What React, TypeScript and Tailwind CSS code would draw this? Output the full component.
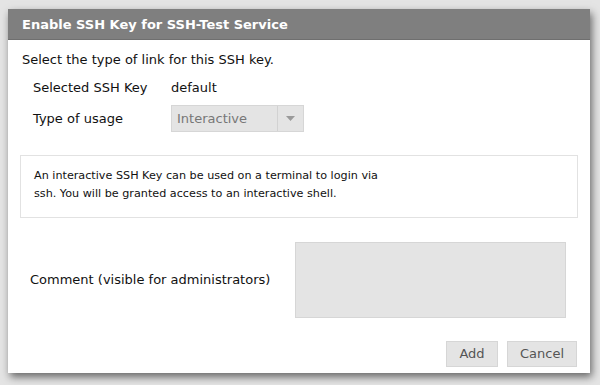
export default function App() {
  return (
    <div className="w-[600px] h-[385px] bg-[#e4e4e4] pt-[9px] pl-[8px] font-['DejaVu_Sans',sans-serif] text-[13px] text-[#111]">
      <div className="w-[582px] h-[364px] bg-white shadow-[2px_4px_8px_rgba(0,0,0,0.55)] flex flex-col">
        <div className="h-[31px] bg-[#7f7f7f] border-b border-[#6f6f6f] flex items-center pt-[2px] px-[14px] text-white font-bold text-[13px]">
          Enable SSH Key for SSH-Test Service
        </div>
        <div className="px-[14px] pt-[12px]">
          <p className="leading-[16px]">Select the type of link for this SSH key.</p>
          <div className="mt-[12px] pl-[11px] flex items-center h-[16px]">
            <span className="w-[138px]">Selected SSH Key</span>
            <span>default</span>
          </div>
          <div className="mt-[9px] pl-[11px] flex items-center">
            <span className="w-[138px]">Type of usage</span>
            <div className="w-[133px] h-[27px] bg-[#e4e4e4] border border-[#d6d6d6] flex">
              <span className="flex-1 flex items-center pl-[5px] text-[#777]">Interactive</span>
              <span className="w-[26px] border-l border-[#d2d2d2] flex items-center justify-center">
                <svg width="9" height="5" viewBox="0 0 9 5"><path d="M0 0h9L4.5 5z" fill="#9a9a9a" /></svg>
              </span>
            </div>
          </div>
          <div className="mt-[23px] -ml-[2px] w-[558px] h-[63px] border border-[#e2e2e2] pl-[13px] pt-[11px]">
            <p className="w-[350px] leading-[18px] text-[11.2px]">
              An interactive SSH Key can be used on a terminal to login via ssh. You will be granted access to an interactive shell.
            </p>
          </div>
          <div className="mt-[24px] flex items-center">
            <span className="w-[273px] pl-[8px]">Comment (visible for administrators)</span>
            <textarea className="w-[271px] h-[76px] bg-[#e4e4e4] border border-[#d6d6d6] resize-none outline-none" />
          </div>
          <div className="mt-[23px] flex justify-end gap-[9px] mr-[-1px]">
            <button className="w-[52px] h-[26px] bg-[#e4e4e4] border border-[#d6d6d6] text-[#555]">Add</button>
            <button className="w-[70px] h-[26px] bg-[#e4e4e4] border border-[#d6d6d6] text-[#555]">Cancel</button>
          </div>
        </div>
      </div>
    </div>
  );
}
